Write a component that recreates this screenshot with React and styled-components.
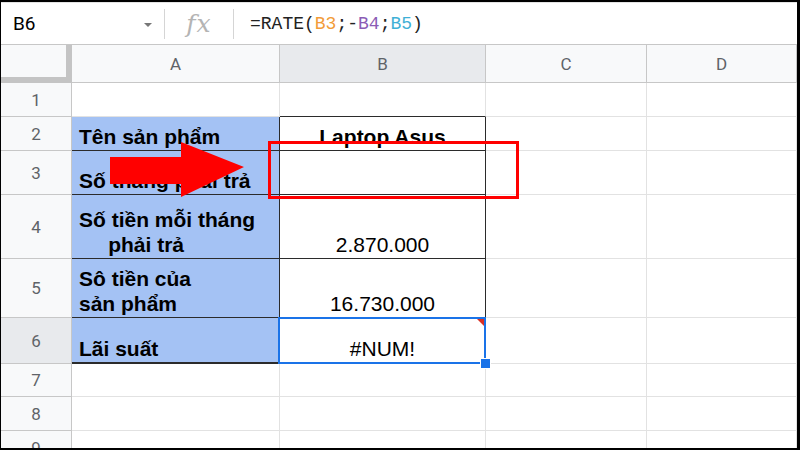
import React from "react"
import styled, { createGlobalStyle } from "styled-components"

const GlobalStyle = createGlobalStyle`
  html, body {
    margin: 0;
    padding: 0;
    background: #fff;
    overflow: hidden;
  }
`

const Frame = styled.div`
  position: relative;
  width: 800px;
  height: 450px;
  box-sizing: border-box;
  border-style: solid;
  border-color: #000;
  border-width: 2px 3px 2px 1px;
  background: #fff;
  overflow: hidden;
  display: flex;
  flex-direction: column;
`

const FormulaBar = styled.div`
  flex-shrink: 0;
  height: 43px;
  box-sizing: border-box;
  border-top: 1px solid #e3e3e3;
  border-bottom: 1px solid #c7c7c7;
  display: flex;
  align-items: center;
  font-family: Roboto, "Liberation Sans", sans-serif;
`

const NameBox = styled.div`
  width: 163px;
  box-sizing: border-box;
  padding: 0 12px;
  display: flex;
  align-items: center;
  justify-content: space-between;
  font-size: 19px;
  color: #000;
`

const Caret = styled.span`
  width: 0;
  height: 0;
  border-left: 4px solid transparent;
  border-right: 4px solid transparent;
  border-top: 4px solid #777;
  margin-top: 2px;
`

const Divider = styled.div`
  width: 1px;
  height: 30px;
  background: #d5d5d5;
`

const Fx = styled.div`
  width: 68px;
  text-align: center;
  font-family: "DejaVu Serif", "Liberation Serif", serif;
  font-style: italic;
  font-size: 25px;
  color: #b4b4b4;
  letter-spacing: 1px;
`

const Formula = styled.div`
  padding-left: 16px;
  font-family: "Liberation Mono", "DejaVu Sans Mono", monospace;
  font-size: 18px;
  color: #222;
`

const Ref = styled.span`
  color: ${(p) => p.$color};
`

const Grid = styled.div`
  display: grid;
  grid-template-columns: 71px 208px 206px 161px 1fr;
  grid-template-rows: 38px 34px 34px 44px 64px 59px 46px 33px 34px 34px;
  flex: 1;
  min-height: 0;
  overflow: hidden;
`

const Corner = styled.div`
  background: #f8f9fa;
  box-shadow: inset -6px -6px 0 #c4c4c4;
`

const ColHead = styled.div`
  display: flex;
  align-items: center;
  justify-content: center;
  background: ${(p) => (p.$active ? "#e8eaed" : "#f8f9fa")};
  border-right: 1px solid #c7c7c7;
  border-bottom: 1px solid #c7c7c7;
  font-family: Roboto, "Liberation Sans", sans-serif;
  font-size: 17px;
  color: #5f6368;
`

const RowHead = styled.div`
  display: flex;
  align-items: center;
  justify-content: center;
  background: ${(p) => (p.$active ? "#e8eaed" : "#f8f9fa")};
  border-right: 1px solid #c7c7c7;
  border-bottom: 1px solid #c7c7c7;
  font-family: Roboto, "Liberation Sans", sans-serif;
  font-size: 17px;
  color: #5f6368;
`

const Cell = styled.div`
  position: relative;
  display: flex;
  flex-direction: column;
  justify-content: flex-end;
  box-sizing: border-box;
  padding: 0 7px 1px;
  background: ${(p) => (p.$fill ? "#a4c2f4" : "#fff")};
  border-right: 1px solid ${(p) => (p.$dr ? "#2b2b2b" : "#e2e2e2")};
  border-bottom: ${(p) => (p.$db ? `${p.$db}px solid #2b2b2b` : "1px solid #e2e2e2")};
  font-family: "Liberation Sans", Arial, sans-serif;
  font-size: 21px;
  line-height: 25px;
  font-weight: ${(p) => (p.$bold ? 700 : 400)};
  text-align: ${(p) => (p.$center ? "center" : "left")};
  color: #000;
  white-space: pre;
`

const Selection = styled.div`
  position: absolute;
  z-index: 2;
  inset: -1px -1px -2px -2px;
  border: 2px solid #1a73e8;
  pointer-events: none;
`

const ErrorMark = styled.div`
  position: absolute;
  top: 0;
  right: 0;
  width: 0;
  height: 0;
  border-top: 7px solid #d93025;
  border-left: 7px solid transparent;
`

const FillHandle = styled.div`
  position: absolute;
  right: -7px;
  bottom: -7px;
  width: 9px;
  height: 9px;
  background: #1a73e8;
  border: 1px solid #fff;
`

const Highlight = styled.div`
  position: absolute;
  left: 267px;
  top: 139px;
  width: 251px;
  height: 58px;
  box-sizing: border-box;
  border: 3px solid #f00;
`

const Arrow = styled.svg`
  position: absolute;
  left: 109px;
  top: 138px;
`

const rows = [
  { n: 1, cells: [{}, { db: 1 }, {}, {}] },
  {
    n: 2,
    cells: [
      { fill: true, bold: true, text: "Tên sản phẩm", dr: true, db: 1 },
      { bold: true, center: true, text: "Laptop Asus", dr: true, db: 1 },
      {},
      {},
    ],
  },
  {
    n: 3,
    cells: [
      { fill: true, bold: true, text: "Số tháng phải trả", dr: true, db: 1 },
      { center: true, text: "", dr: true, db: 1 },
      {},
      {},
    ],
  },
  {
    n: 4,
    cells: [
      { fill: true, bold: true, text: "Số tiền mỗi tháng\n     phải trả", dr: true, db: 1 },
      { center: true, text: "2.870.000", dr: true, db: 1 },
      {},
      {},
    ],
  },
  {
    n: 5,
    cells: [
      { fill: true, bold: true, text: "Sô tiền của\nsản phẩm", dr: true, db: 1 },
      { center: true, text: "16.730.000", dr: true, db: 1 },
      {},
      {},
    ],
  },
  {
    n: 6,
    active: true,
    cells: [
      { fill: true, bold: true, text: "Lãi suất", dr: true, db: 2 },
      { center: true, text: "#NUM!", dr: true, db: 2, selected: true },
      {},
      {},
    ],
  },
  { n: 7, cells: [{}, {}, {}, {}] },
  { n: 8, cells: [{}, {}, {}, {}] },
  { n: 9, cells: [{}, {}, {}, {}] },
]

const columns = ["A", "B", "C", "D"]

export default function App() {
  return (
    <>
      <GlobalStyle />
      <Frame>
        <FormulaBar>
          <NameBox>
            B6
            <Caret />
          </NameBox>
          <Divider />
          <Fx>fx</Fx>
          <Divider />
          <Formula>
            =RATE(<Ref $color="#f29b38">B3</Ref>;-<Ref $color="#8b5cb5">B4</Ref>;
            <Ref $color="#3fb0d6">B5</Ref>)
          </Formula>
        </FormulaBar>

        <Grid>
          <Corner />
          {columns.map((c) => (
            <ColHead key={c} $active={c === "B"}>
              {c}
            </ColHead>
          ))}

          {rows.map((row) => (
            <React.Fragment key={row.n}>
              <RowHead $active={row.active}>{row.n}</RowHead>
              {row.cells.map((cell, i) => (
                <Cell
                  key={i}
                  $fill={cell.fill}
                  $bold={cell.bold}
                  $center={cell.center}
                  $dr={cell.dr}
                  $db={cell.db}
                >
                  {cell.text}
                  {cell.selected && (
                    <Selection>
                      <ErrorMark />
                      <FillHandle />
                    </Selection>
                  )}
                </Cell>
              ))}
            </React.Fragment>
          ))}
        </Grid>

        <Highlight />
        <Arrow width="136" height="60" viewBox="0 0 136 60">
          <polygon points="0,17 71,17 71,2 134,27 71,57 71,44 0,44" fill="#f00" />
        </Arrow>
      </Frame>
    </>
  )
}
